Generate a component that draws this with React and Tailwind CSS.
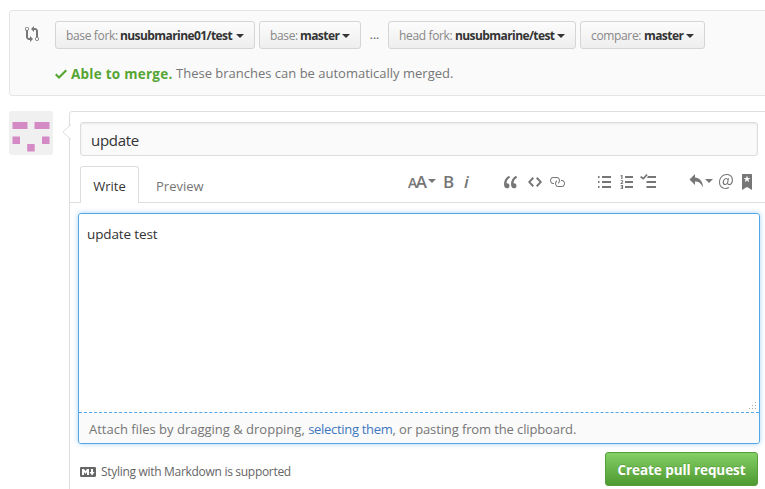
import React from "react";

const ICONS = {
  compare: ["0 0 14 16", "M5 12H4c-.27-.02-.48-.11-.69-.31-.21-.2-.3-.42-.31-.69V4.72A1.993 1.993 0 0 0 2 1a1.993 1.993 0 0 0-1 3.72V11c.03.78.34 1.47.94 2.06.6.59 1.28.91 2.06.94h1v2l3-3-3-3v2zM2 1.8c.66 0 1.2.55 1.2 1.2 0 .65-.55 1.2-1.2 1.2C1.35 4.2.8 3.65.8 3c0-.65.55-1.2 1.2-1.2zm11 9.48V5c-.03-.78-.34-1.47-.94-2.06-.6-.59-1.28-.91-2.06-.94H9V0L6 3l3 3V4h1c.27.02.48.11.69.31.21.2.3.42.31.69v6.28A1.993 1.993 0 0 0 12 15a1.993 1.993 0 0 0 1-3.72zm-1 2.92c-.66 0-1.2-.55-1.2-1.2 0-.65.55-1.2 1.2-1.2.65 0 1.2.55 1.2 1.2 0 .65-.55 1.2-1.2 1.2z"],
  check: ["0 0 12 16", "M12 5l-8 8-4-4 1.5-1.5L4 10l6.5-6.5z"],
  quote: ["0 0 14 16", "M6.16 3.5C3.73 5.06 2.55 6.67 2.55 9.36c.16-.05.3-.05.44-.05 1.27 0 2.5.86 2.5 2.41 0 1.61-1.03 2.61-2.5 2.61-1.9 0-2.99-1.52-2.99-4.25 0-3.8 1.75-6.53 5.02-8.42L6.16 3.5zm7 0c-2.43 1.56-3.61 3.17-3.61 5.86.16-.05.3-.05.44-.05 1.27 0 2.5.86 2.5 2.41 0 1.61-1.03 2.61-2.5 2.61-1.89 0-2.98-1.52-2.98-4.25 0-3.8 1.75-6.53 5.02-8.42l1.14 1.84h-.01z"],
  code: ["0 0 14 16", "M9.5 3L8 4.5 11.5 8 8 11.5 9.5 13 14 8 9.5 3zm-5 0L0 8l4.5 5L6 11.5 2.5 8 6 4.5 4.5 3z"],
  link: ["0 0 16 16", "M4 9h1v1H4c-1.5 0-3-1.69-3-3.5S2.55 3 4 3h4c1.45 0 3 1.69 3 3.5 0 1.41-.91 2.72-2 3.25V8.59c.58-.45 1-1.27 1-2.09C10 5.22 8.98 4 8 4H4c-.98 0-2 1.22-2 2.5S3 9 4 9zm9-3h-1v1h1c1 0 2 1.22 2 2.5S13.98 12 13 12H9c-.98 0-2-1.22-2-2.5 0-.83.42-1.64 1-2.09V6.25c-1.09.53-2 1.84-2 3.25C6 11.31 7.55 13 9 13h4c1.45 0 3-1.69 3-3.5S14.5 6 13 6z"],
  list: ["0 0 14 16", "M0 2h1.500v2H0zM4 2H13v2H4zM0 7h1.500v2H0zM4 7H13v2H4zM0 12h1.500v2H0zM4 12H13v2H4z"],
  ordered: ["0 0 14 16", "M5 2h8v2H5zM5 7h8v2H5zM5 12h8v2H5zM1.300 1h1.200v4H1.300V2.200H.6V1.400zM.6 6.200h2.500v1.800L1.800 9.200h1.400V10H.5V9.200L2.100 7.700V7H.6zM.6 11h2.500v4H.5v-.8h1.500v-.8H.9v-.8h1.100v-.8H.6z"],
  task: ["0 0 16 16", "M8 2h8v2H7zM6.500 7H16v2H6.500zM6.500 12H16v2H6.500zM7.700 1.200L3.300 5.800 0 3.200l1.200-1.300 2 1.500L6.400 0z"],
  reply: ["0 0 14 16", "M6 3.5c3.92.44 8 3.125 8 10-2.312-5.062-4.75-6-8-6V11L.5 5.5 6 0v3.5z"],
  mention: ["0 0 14 16", "M6.58 15c1.25 0 2.52-.31 3.56-.94l-.42-.94c-.84.52-1.89.83-3.03.83-3.23 0-5.64-2.08-5.64-5.72 0-4.37 3.23-7.18 6.58-7.18 3.45 0 5.22 2.19 5.22 5.2 0 2.39-1.34 3.86-2.5 3.86-1.05 0-1.36-.73-1.05-2.19l.73-3.75H8.98l-.11.72c-.41-.63-.94-.83-1.56-.83-2.19 0-3.66 2.39-3.66 4.38 0 1.67.94 2.61 2.3 2.61.84 0 1.67-.53 2.3-1.25.11.94.94 1.45 1.98 1.45 1.67 0 3.77-1.67 3.77-5C14 2.61 11.59 0 7.83 0 3.66 0 0 3.33 0 8.33 0 12.71 2.92 15 6.58 15zm-.31-5c-.73 0-1.36-.52-1.36-1.67 0-1.45.94-3.22 2.41-3.22.52 0 .84.2 1.25.83l-.52 3.02c-.63.73-1.25 1.05-1.78 1.05V10z"],
  bookmark: ["0 0 10 16", "M9 0H1C.27 0 0 .27 0 1v15l5-3.09L10 16V1c0-.73-.27-1-1-1zm-.78 4.25L6.36 5.61l.72 2.16c.06.22-.02.28-.2.17L5 6.6 3.12 7.94c-.19.11-.25.05-.2-.17l.72-2.16-1.86-1.36c-.17-.16-.14-.23.09-.23l2.3-.03.7-2.16h.25l.7 2.16 2.3.03c.23 0 .27.08.09.23h.01z"],
  markdown: ["0 0 16 16", "M14.85 3H1.15C.52 3 0 3.52 0 4.15v7.69C0 12.48.52 13 1.15 13h13.69c.64 0 1.15-.52 1.15-1.15v-7.7C16 3.52 15.48 3 14.85 3zM9 11H7V8L5.5 9.92 4 8v3H2V5h2l1.5 2L7 5h2v6zm2.99.5L9.5 8H11V5h2v3h1.5l-2.51 3.5z"],
};

function Icon({ name, className }) {
  const [viewBox, d] = ICONS[name];
  return (
    <svg viewBox={viewBox} preserveAspectRatio="none" fill="currentColor" className={`shrink-0 ${className}`}>
      <path d={d} />
    </svg>
  );
}

function Caret({ className }) {
  return <span className={`shrink-0 border-x-4 border-t-4 border-x-transparent ${className}`} />;
}

function BranchButton({ label, value, className, labelClass, valueClass }) {
  return (
    <button className={`flex h-7 shrink-0 items-center rounded-[3px] border border-[#d5d5d5] bg-linear-to-b from-[#fcfcfc] to-[#eee] pt-px pl-2.5 text-[12px] whitespace-nowrap ${className}`}>
      <span className={`shrink-0 text-left tracking-[-0.35px] text-[#888] ${labelClass}`}>{label}</span>
      <span className={`shrink-0 text-left font-bold tracking-[-0.58px] text-[#333] ${valueClass}`}>{value}</span>
      <Caret className="border-t-[#333]" />
    </button>
  );
}

function CompareBar() {
  return (
    <section className="mt-2.5 ml-[9px] h-[86px] w-[780px] rounded-[3px] border border-[#e5e5e5] bg-[#fafafa] pt-2.5">
      <div className="flex items-center">
        <Icon name="compare" className="mr-4 mb-0.5 ml-[15px] h-4 w-3.5 text-[#777]" />
        <BranchButton label="base fork:" value="nusubmarine01/test" className="mr-1 w-[200px]" labelClass="w-[54px]" valueClass="w-[116px]" />
        <BranchButton label="base:" value="master" className="w-[102px]" labelClass="w-[30px]" valueClass="w-[42px]" />
        <span className="w-[27px] text-center text-[12px] text-[#555]">...</span>
        <BranchButton label="head fork:" value="nusubmarine/test" className="mr-1 w-[188px]" labelClass="w-14" valueClass="w-[102px]" />
        <BranchButton label="compare:" value="master" className="w-[125px]" labelClass="w-[53px]" valueClass="w-[42px]" />
      </div>
      <p className="mt-[15px] ml-[45px] flex h-5 items-center text-[13px] whitespace-nowrap text-[#767676]">
        <Icon name="check" className="mr-1 h-4 w-3 text-[#55a532]" />
        <strong className="w-[105px] text-[13.5px] tracking-[0.25px] text-[#55a532]">Able to merge.</strong>
        <span>These branches can be automatically merged.</span>
      </p>
    </section>
  );
}

function Avatar() {
  return (
    <svg viewBox="0 0 44 44" className="h-11 w-11 shrink-0">
      <rect width="44" height="44" rx="3" fill="#f0f0f0" />
      <path fill="#d48ac5" d="M3.500 11h15v7h-15zM25.500 11h15v7h-15zM3.500 25.500h7.500V33H3.500zM33 25.500h7.500V33H33zM18.200 33h7.500v7.500h-7.500z" />
    </svg>
  );
}

function Toolbar() {
  return (
    <div className="flex h-8 w-[356px] shrink-0 items-center text-[#767676]">
      <span className="flex w-[18px] shrink-0 items-baseline pb-0.5 leading-none font-semibold">
        <span className="text-[14px] tracking-[-1.5px]">A</span>
        <span className="text-[17px]">A</span>
      </span>
      <Caret className="mr-[7px] mb-0.5 ml-0.5 border-t-[#767676]" />
      <span className="w-[21px] pb-0.5 text-[17px] leading-none font-semibold">B</span>
      <span className="w-10 pb-0.5 text-[17px] leading-none font-semibold italic">i</span>
      <Icon name="quote" className="mr-[10px] h-4 w-3.5" />
      <Icon name="code" className="mr-[7px] h-4 w-3.5" />
      <Icon name="link" className="mr-[33px] h-4 w-4" />
      <Icon name="list" className="mr-2 h-4 w-3.5" />
      <Icon name="ordered" className="mr-1.5 h-4 w-3.5" />
      <Icon name="task" className="mr-[33px] h-4 w-4" />
      <Icon name="reply" className="mr-0.5 h-4 w-3.5" />
      <Caret className="mr-1.5 mb-0.5 border-t-[#767676]" />
      <Icon name="mention" className="mr-[9px] h-4 w-3.5" />
      <Icon name="bookmark" className="h-4 w-2.5" />
    </div>
  );
}

function Editor() {
  return (
    <div className="mt-2.5 ml-2 h-[231px] w-[682px] rounded-[3px] border border-[#51a7e8] shadow-[0_0_5px_rgba(81,167,232,0.5)]">
      <div className="relative h-[198px] rounded-t-[3px] bg-white px-2 pt-2.5 text-[13.5px] leading-5 tracking-[-0.12px] text-[#333]">
        update test
        <svg viewBox="0 0 9 9" className="absolute right-0.5 bottom-0.5 h-[9px] w-[9px]" fill="#a8a8a8">
          <path d="M7 1h1v1H7zM7 4h1v1H7zM7 7h1v1H7zM4 4h1v1H4zM4 7h1v1H4zM1 7h1v1H1z" />
        </svg>
      </div>
      <div className="h-[31px] rounded-b-[3px] border-t border-dashed border-[#51a7e8] bg-[#fafafa] pt-1.5 pl-2.5 text-[13px] leading-5 whitespace-nowrap text-[#767676]">
        Attach files by dragging &amp; dropping, <a className="tracking-[-0.3px] text-[#4078c0]">selecting them</a>
        <span className="tracking-[-0.12px]">, or pasting from the clipboard.</span>
      </div>
    </div>
  );
}

export default function App() {
  return (
    <main className="h-[489px] w-[765px] overflow-hidden bg-white font-['Open_Sans','Noto_Sans',sans-serif]">
      <CompareBar />
      <div className="mt-[15px] flex">
        <div className="ml-[9px] w-[60px] shrink-0">
          <Avatar />
        </div>
        <section className="relative h-[420px] w-[720px] shrink-0 rounded-tl-[3px] border border-[#ddd]">
          <svg viewBox="0 0 9 16" className="absolute top-3 -left-2 h-4 w-[9px]">
            <path d="M9 .500L1 8l8 7.500" fill="#fff" stroke="#ddd" />
          </svg>
          <div className="mt-2.5 ml-2.5 flex h-[34px] w-[678px] items-center rounded-[3px] border border-[#ddd] bg-[#fafafa] px-2.5 text-[15px] tracking-[-0.3px] text-[#333] shadow-[inset_0_1px_2px_rgba(0,0,0,0.075)]">
            <span className="mt-0.5">update</span>
          </div>
          <div className="mt-2.5 flex h-[37px] border-b border-[#ddd] pl-2.5 text-[13px]">
            <div className="flex h-[37px] w-[59px] shrink-0 items-center justify-center rounded-t-[3px] border border-b-0 border-[#ddd] bg-white pt-1 text-[#333]">Write</div>
            <div className="flex h-[37px] w-[269px] shrink-0 items-center pt-1 pl-[17px] text-[#767676]">Preview</div>
            <Toolbar />
          </div>
          <Editor />
          <footer className="mt-2 ml-2.5 flex h-[34px] w-[678px] items-center justify-between">
            <span className="flex items-center gap-[5px] pt-1.5 text-[12px] tracking-[-0.3px] whitespace-nowrap text-[#666]">
              <Icon name="markdown" className="h-4 w-4" />
              <span>Styling with Markdown is supported</span>
            </span>
            <button className="h-[34px] w-[153px] rounded-[3px] border border-[#569e3d] bg-linear-to-b from-[#84d065] to-[#4f9a30] pt-0.5 text-[13.5px] font-bold tracking-[-0.08px] whitespace-nowrap text-white [text-shadow:0_-1px_0_rgba(0,0,0,0.15)]">
              Create pull request
            </button>
          </footer>
        </section>
      </div>
    </main>
  );
}
